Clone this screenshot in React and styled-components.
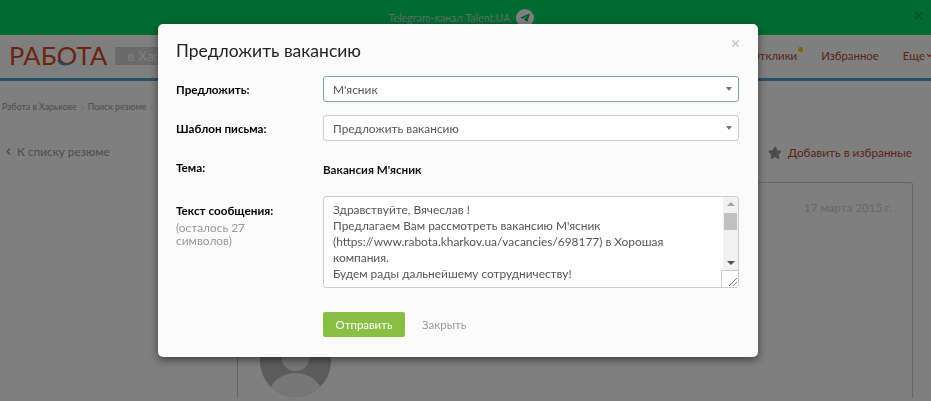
import styled, { createGlobalStyle } from 'styled-components';
import { ChevronDown, ChevronLeft, ChevronRight, Star, X } from 'lucide-react';

const GlobalStyle = createGlobalStyle`
  html, body {
    margin: 0;
    height: 100%;
    overflow: hidden;
  }
  body {
    font-family: Lato, "Open Sans", "Liberation Sans", sans-serif;
    background: #fff;
  }
`;

const Banner = styled.div`
  height: 35px;
  background: #00d660;
  display: flex;
  align-items: center;
  justify-content: center;
  gap: 6px;
  position: relative;
  color: #b4dcc4;
  font-size: 10.6px;
  padding-right: 8px;
  box-sizing: border-box;
`;

const TelegramIcon = styled.span`
  width: 18px;
  height: 18px;
  border-radius: 50%;
  background: #fff;
  display: flex;
  align-items: center;
  justify-content: center;
`;

const BannerClose = styled.span`
  position: absolute;
  right: 6px;
  top: 9px;
  color: #00a04a;
  display: flex;
`;

const Header = styled.header`
  height: 46px;
  box-sizing: border-box;
  background: #fff;
  border-bottom: 3px solid #4aa0d0;
  display: flex;
  align-items: center;
  padding: 0 0 2px 9px;
`;

const Logo = styled.div`
  position: relative;
  font-size: 25.5px;
  letter-spacing: 0.2px;
  color: #d8481f;
  line-height: 1;
`;

const LogoArc = styled.svg`
  position: absolute;
  left: 46px;
  top: 4px;
`;

const City = styled.div`
  margin-left: 8px;
  width: 130px;
  height: 18px;
  box-sizing: border-box;
  padding-left: 12px;
  background: #d4d4d4;
  color: #fff;
  font-size: 14px;
  line-height: 18px;
`;

const Nav = styled.nav`
  margin-left: auto;
  margin-right: -3px;
  display: flex;
  align-items: center;
  gap: 24px;
  font-size: 11.4px;
  color: #b04a30;
`;

const NavItem = styled.span`
  position: relative;
  display: flex;
  align-items: center;
`;

const NavDot = styled.i`
  position: absolute;
  right: -6px;
  top: -2px;
  width: 5px;
  height: 5px;
  border-radius: 50%;
  background: #ffc800;
`;

const Crumbs = styled.div`
  display: flex;
  align-items: center;
  gap: 1px;
  padding: 19px 0 0 2px;
  font-size: 8.8px;
  line-height: 14px;
  color: #999;
`;

const BackRow = styled.div`
  display: flex;
  justify-content: space-between;
  align-items: center;
  padding: 28px 19px 0 3px;
  font-size: 11.8px;
`;

const BackLink = styled.span`
  display: flex;
  align-items: center;
  gap: 3px;
  color: #999;
`;

const Favorite = styled.span`
  display: flex;
  align-items: center;
  gap: 6px;
  margin-top: 3px;
  color: #b04a30;
`;

const Card = styled.section`
  margin: 22px 18px 0 237px;
  height: 216px;
  box-sizing: border-box;
  border: 1px solid #ccc;
  border-bottom: 0;
  border-radius: 3px 3px 0 0;
  padding: 18px 20px 0 22px;
  background: #fff;
`;

const CardDate = styled.div`
  text-align: right;
  font-size: 11.6px;
  line-height: 14px;
  color: #d0d0d0;
`;

const Avatar = styled.div`
  margin-top: 111px;
  width: 71px;
  height: 71px;
  border-radius: 50%;
  background: #b8b8b8;
  overflow: hidden;
`;

const Backdrop = styled.div`
  position: fixed;
  inset: 0;
  background: rgba(0, 0, 0, 0.5);
  padding: 24px 0 0 158px;
  box-sizing: border-box;
`;

const Modal = styled.div`
  position: relative;
  width: 600px;
  height: 333px;
  box-sizing: border-box;
  padding: 17px 18px 20px;
  background: #fbfbfb;
  border-radius: 5px;
  box-shadow: 0 3px 9px rgba(0, 0, 0, 0.5);
`;

const ModalClose = styled.span`
  position: absolute;
  right: 17px;
  top: 14px;
  color: #c4c4c4;
  display: flex;
`;

const Title = styled.h2`
  margin: 0 0 15px;
  font-size: 17.5px;
  font-weight: 400;
  line-height: 20px;
  color: #222;
`;

const Row = styled.div`
  display: grid;
  grid-template-columns: 147px 416px;
  margin-bottom: ${(p) => p.$gap ?? 13}px;
`;

const Label = styled.div`
  padding-top: ${(p) => p.$top ?? 5}px;
  font-size: 11.7px;
  font-weight: 700;
  line-height: 16px;
  color: #000;
`;

const Hint = styled.div`
  margin-top: 3px;
  font-size: 11.9px;
  font-weight: 400;
  line-height: 13px;
  color: #999;
  width: 100px;
`;

const Select = styled.div`
  height: 26px;
  box-sizing: border-box;
  border: 1px solid ${(p) => (p.$focused ? '#8b9aa8' : '#ccc')};
  border-radius: 3px;
  background: #fff;
  padding: 0 6px 0 9px;
  display: flex;
  align-items: center;
  justify-content: space-between;
  font-size: 11.9px;
  color: #555;
`;

const Caret = styled.i`
  width: 0;
  height: 0;
  border-left: 3.5px solid transparent;
  border-right: 3.5px solid transparent;
  border-top: 4px solid #777;
`;

const Subject = styled.div`
  padding-top: 7px;
  font-size: 11.7px;
  font-weight: 700;
  line-height: 16px;
  color: #111;
`;

const MessageBox = styled.div`
  height: 92px;
  box-sizing: border-box;
  border: 1px solid #ccc;
  border-radius: 3px;
  background: #fff;
  display: flex;
  overflow: hidden;
`;

const MessageText = styled.div`
  flex: 1;
  padding: 5px 9px 0;
  font-size: 11.9px;
  line-height: 16px;
  color: #555;
  white-space: pre-line;
`;

const ScrollColumn = styled.div`
  width: 17px;
  display: flex;
  flex-direction: column;
  align-items: flex-end;
`;

const ScrollTrack = styled.div`
  flex: 1;
  width: 15px;
  background: #f1f1f1;
  display: flex;
  flex-direction: column;
  align-items: center;
  padding-top: 5px;
  box-sizing: border-box;
`;

const ArrowUp = styled.i`
  border-left: 4px solid transparent;
  border-right: 4px solid transparent;
  border-bottom: 4px solid #a3a3a3;
`;

const ArrowDown = styled.i`
  margin-top: auto;
  margin-bottom: 5px;
  border-left: 4px solid transparent;
  border-right: 4px solid transparent;
  border-top: 4px solid #505050;
`;

const Thumb = styled.div`
  margin-top: 7px;
  width: 13px;
  height: 17px;
  background: #c1c1c1;
`;

const ResizeCorner = styled.div`
  width: 17px;
  height: 17px;
  box-sizing: border-box;
  border-top: 1px solid #ccc;
  border-left: 1px solid #ccc;
  display: flex;
  align-items: flex-end;
  justify-content: flex-end;
`;

const Footer = styled.div`
  margin: 24px 0 0 147px;
  display: flex;
  align-items: center;
  gap: 17px;
`;

const SendButton = styled.button`
  width: 82px;
  height: 25px;
  border: 0;
  border-radius: 2px;
  background: #8abf45;
  color: #fff;
  font: 400 11.4px Lato, sans-serif;
  padding: 0;
`;

const CloseLink = styled.span`
  font-size: 11.5px;
  color: #999;
`;

export default function App() {
  return (
    <>
      <GlobalStyle />
      <Banner>
        Telegram-канал Talent.UA
        <TelegramIcon>
          <svg width="12" height="12" viewBox="0 0 12 12">
            <path d="M11 1.5 L1 5.6 L3.8 6.8 L8.8 3.4 L4.9 7.4 L8.4 10 Z" fill="#00b050" />
          </svg>
        </TelegramIcon>
        <BannerClose>
          <X size={13} strokeWidth={3} />
        </BannerClose>
      </Banner>
      <Header>
        <Logo>
          РАБОТА
          <LogoArc width="20" height="20" viewBox="0 0 20 20">
            <path d="M3 13 A8 8 0 0 0 15 16" fill="none" stroke="#4a90c0" strokeWidth="2" />
          </LogoArc>
        </Logo>
        <City>в Харькове</City>
        <Nav>
          <NavItem>
            Отклики
            <NavDot />
          </NavItem>
          <NavItem>Избранное</NavItem>
          <NavItem>
            Еще
            <ChevronDown size={9} strokeWidth={3} color="#e03020" />
          </NavItem>
        </Nav>
      </Header>
      <Crumbs>
        Работа в Харькове
        <ChevronRight size={9} color="#ccc" />
        Поиск резюме
        <ChevronRight size={9} color="#ccc" />
        Резюме
      </Crumbs>
      <BackRow>
        <BackLink>
          <ChevronLeft size={11} strokeWidth={2.5} />
          К списку резюме
        </BackLink>
        <Favorite>
          <Star size={14} fill="#999" color="#999" />
          Добавить в избранные
        </Favorite>
      </BackRow>
      <Card>
        <CardDate>17 марта 2015 г.</CardDate>
        <Avatar>
          <svg width="71" height="71" viewBox="0 0 71 71">
            <circle cx="35.5" cy="31" r="14" fill="#ececec" />
            <ellipse cx="35.5" cy="70" rx="27" ry="23" fill="#ececec" />
          </svg>
        </Avatar>
      </Card>
      <Backdrop>
        <Modal>
          <ModalClose>
            <X size={11} strokeWidth={3} />
          </ModalClose>
          <Title>Предложить вакансию</Title>
          <Row>
            <Label>Предложить:</Label>
            <Select $focused>
              М'ясник
              <Caret />
            </Select>
          </Row>
          <Row>
            <Label>Шаблон письма:</Label>
            <Select>
              Предложить вакансию
              <Caret />
            </Select>
          </Row>
          <Row $gap={19}>
            <Label>Тема:</Label>
            <Subject>Вакансия М'ясник</Subject>
          </Row>
          <Row $gap={0}>
            <Label $top={6}>
              Текст сообщения:
              <Hint>(осталось 27 символов)</Hint>
            </Label>
            <MessageBox>
              <MessageText>
                {`Здравствуйте, Вячеслав !
                Предлагаем Вам рассмотреть вакансию М'ясник
                (https://www.rabota.kharkov.ua/vacancies/698177) в Хорошая компания.
                Будем рады дальнейшему сотрудничеству!`}
              </MessageText>
              <ScrollColumn>
                <ScrollTrack>
                  <ArrowUp />
                  <Thumb />
                  <ArrowDown />
                </ScrollTrack>
                <ResizeCorner>
                  <svg width="10" height="10" viewBox="0 0 10 10">
                    <path d="M1 9 L9 1 M5 9 L9 5" stroke="#777" strokeWidth="1" />
                  </svg>
                </ResizeCorner>
              </ScrollColumn>
            </MessageBox>
          </Row>
          <Footer>
            <SendButton>Отправить</SendButton>
            <CloseLink>Закрыть</CloseLink>
          </Footer>
        </Modal>
      </Backdrop>
    </>
  );
}
